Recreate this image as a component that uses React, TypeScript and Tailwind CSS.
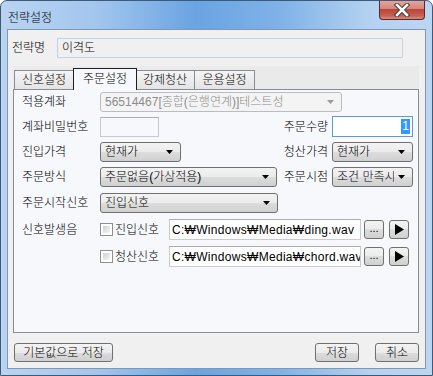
import React from "react";

const FONT = "font-[family-name:'Liberation_Sans','Noto_Sans_CJK_KR',sans-serif]";

function Arrow({ muted = false }: { muted?: boolean }) {
  return (
    <svg width="7" height="4" viewBox="0 0 7 4" className="shrink-0">
      <path d="M0 0h7L3.5 4z" fill={muted ? "#9a9a9a" : "#000"} />
    </svg>
  );
}

function Combo({ text, className = "", disabled = false }: { text: string; className?: string; disabled?: boolean }) {
  return (
    <div
      className={`h-[20px] flex items-center rounded-[3px] border pl-[4px] pr-[7px] gap-[4px] ${
        disabled
          ? "border-[#b9bcc0] bg-[#f4f4f4] text-[#8c8c8c]"
          : "border-[#707070] bg-[linear-gradient(#f3f3f3_0%,#ebebeb_50%,#dddddd_50%,#d0d0d0_100%)] text-black"
      } ${className}`}
    >
      <span className="flex-1 overflow-hidden whitespace-nowrap">{text}</span>
      <Arrow muted={disabled} />
    </div>
  );
}

function Check() {
  return (
    <div className="w-[13px] h-[13px] border border-[#8e8f8f] bg-white p-[2px] shrink-0">
      <div className="w-full h-full bg-[linear-gradient(135deg,#cbcfd5,#f6f6f6)]" />
    </div>
  );
}

function SmallBtn({ children, className = "" }: { children: React.ReactNode; className?: string }) {
  return (
    <div
      className={`h-[19px] flex items-center justify-center rounded-[3px] border border-[#707070] bg-[linear-gradient(#f3f3f3_0%,#ebebeb_50%,#dddddd_50%,#d0d0d0_100%)] ${className}`}
    >
      {children}
    </div>
  );
}

function SoundRow({ label, path }: { label: string; path: string }) {
  return (
    <div className="flex items-center h-[21px]">
      <Check />
      <span className="ml-[2px] w-[54px]">{label}</span>
      <div className="w-[192px] h-[21px] border border-[#c8ccd2] border-t-[#abadb3] bg-white flex items-center pl-[2px] overflow-hidden">
        <span className="whitespace-nowrap tracking-[0.3px]">{path}</span>
      </div>
      <SmallBtn className="ml-[3px] w-[20px] text-[11px] leading-none pb-[3px]">...</SmallBtn>
      <SmallBtn className="ml-[5px] w-[20px]">
        <svg width="9" height="11" viewBox="0 0 9 11">
          <path d="M0 0L9 5.5L0 11z" fill="#000" />
        </svg>
      </SmallBtn>
    </div>
  );
}

export default function App() {
  return (
    <div
      className={`${FONT} font-light text-[12px] leading-[14px] text-black w-[433px] h-[376px] border border-[#3d5a78] rounded-t-[7px] bg-[linear-gradient(90deg,#b9d4f1_0%,#a3c6ee_22%,#6aa4e2_45%,#80b2e8_65%,#b3d1f1_85%,#bcd6f2_100%)] flex flex-col overflow-hidden`}
    >
      {/* Title bar */}
      <div className="h-[28px] flex items-start justify-between">
        <span className="pl-[7px] pt-[10px]">전략설정</span>
        <div className="-mt-[1px] mr-[7px] w-[46px] h-[20px] rounded-b-[4px] border border-[#5a2a28] border-t-0 bg-[linear-gradient(#e7a99f_0%,#d7867b_45%,#b9473c_50%,#c55c4e_80%,#d98a7b_100%)] flex items-center justify-center">
          <svg width="16" height="14" viewBox="0 0 16 14">
            <path d="M3 2L13 12M13 2L3 12" stroke="#4a3a3a" strokeWidth="4.5" strokeLinecap="square" />
            <path d="M3 2L13 12M13 2L3 12" stroke="#fff" strokeWidth="2.5" strokeLinecap="square" />
          </svg>
        </div>
      </div>

      {/* Client area */}
      <div className="mx-[6px] h-[340px] border border-[#8396b0] bg-[#f0f0f0] flex flex-col">
        {/* 전략명 */}
        <div className="mt-[8px] ml-[4px] flex items-center h-[20px]">
          <span className="w-[45px]">전략명</span>
          <div className="w-[346px] h-[20px] border border-[#c2d3e6] bg-[#f0f0f0] flex items-center pl-[4px]">이격도</div>
        </div>

        {/* Tab control */}
        <div className="mt-[8px] ml-[5px] w-[406px] flex flex-col">
          <div className="h-[23px] bg-[#eaeaea] flex items-end pl-[1px]">
            <div className="w-[60px] h-[19px] border border-b-0 border-[#898c95] bg-[linear-gradient(#f4f4f4,#e4e4e4)] flex items-center justify-center">
              신호설정
            </div>
            <div className="-ml-[1px] w-[64px] h-[22px] -mb-[1px] border border-b-0 border-[#1e1e1e] bg-[#f6f8fb] flex items-center justify-center pb-[1px] z-10">
              주문설정
            </div>
            <div className="-ml-[1px] w-[59px] h-[19px] border border-b-0 border-l-0 border-[#898c95] bg-[linear-gradient(#f4f4f4,#e4e4e4)] flex items-center justify-center">
              강제청산
            </div>
            <div className="w-[60px] h-[19px] border border-b-0 border-l-0 border-[#898c95] bg-[linear-gradient(#f4f4f4,#e4e4e4)] flex items-center justify-center">
              운용설정
            </div>
          </div>
          <div className="h-[244px] border border-[#898c95] bg-[#f6f8fb] flex flex-col pl-[8px] pr-[5px]">
            {/* 적용계좌 */}
            <div className="mt-[2px] flex items-center h-[20px]">
              <span className="w-[78px]">적용계좌</span>
              <Combo disabled text="56514467[종합(은행연계)]테스트성" className="w-[242px]" />
            </div>
            {/* 계좌비밀번호 / 주문수량 */}
            <div className="mt-[4px] flex items-center h-[21px]">
              <span className="w-[78px]">계좌비밀번호</span>
              <div className="w-[59px] h-[20px] border border-[#c6cad0] border-t-[#abadb3] bg-[#f6f8fb]" />
              <span className="ml-auto w-[48px] mr-[4px] text-right">주문수량</span>
              <div className="w-[81px] h-[21px] border border-[#5b9bd8] bg-white flex items-center justify-end pr-[2px]">
                <span className="bg-[#3399ff] text-white px-[1px] leading-[15px]">1</span>
              </div>
            </div>
            {/* 진입가격 / 청산가격 */}
            <div className="mt-[5px] flex items-center h-[20px]">
              <span className="w-[78px]">진입가격</span>
              <Combo text="현재가" className="w-[81px]" />
              <span className="ml-auto w-[48px] mr-[4px] text-right">청산가격</span>
              <Combo text="현재가" className="w-[81px]" />
            </div>
            {/* 주문방식 / 주문시점 */}
            <div className="mt-[5px] flex items-center h-[20px]">
              <span className="w-[78px]">주문방식</span>
              <Combo text="주문없음(가상적용)" className="w-[177px]" />
              <span className="ml-auto w-[48px] mr-[4px] text-right">주문시점</span>
              <Combo text="조건 만족시" className="w-[81px]" />
            </div>
            {/* 주문시작신호 */}
            <div className="mt-[6px] flex items-center h-[20px]">
              <span className="w-[78px]">주문시작신호</span>
              <Combo text="진입신호" className="w-[178px]" />
            </div>
            {/* 신호발생음 */}
            <div className="mt-[6px] flex items-center h-[21px]">
              <span className="w-[78px]">신호발생음</span>
              <SoundRow label="진입신호" path="C:₩Windows₩Media₩ding.wav" />
            </div>
            <div className="mt-[6px] flex items-center h-[21px] pl-[78px]">
              <SoundRow label="청산신호" path="C:₩Windows₩Media₩chord.wav" />
            </div>
          </div>
        </div>

        {/* Bottom buttons */}
        <div className="mt-[10px] flex items-center px-[6px]">
          <SmallBtn className="w-[99px]">기본값으로 저장</SmallBtn>
          <SmallBtn className="ml-auto w-[44px] border-[#3c7fb1] bg-[linear-gradient(#eaf6fd_0%,#d9f0fc_50%,#bee6fd_50%,#a7d9f5_100%)]">
            저장
          </SmallBtn>
          <SmallBtn className="ml-[16px] w-[44px]">취소</SmallBtn>
        </div>
      </div>
    </div>
  );
}
